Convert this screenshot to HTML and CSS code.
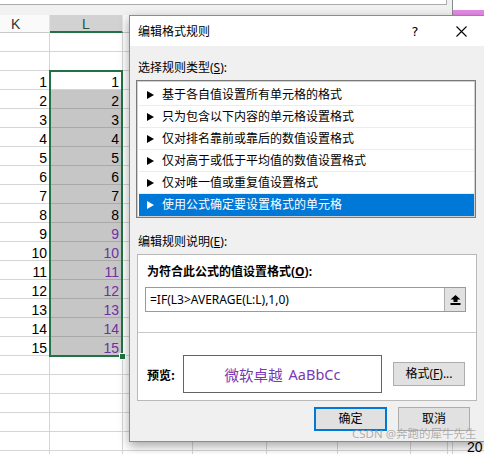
FILE: index.html
```html
<!DOCTYPE html>
<html>
<head>
<meta charset="utf-8">
<link rel="stylesheet" href="styles.css">
</head>
<body>
<div class="sheet">
  <div class="topbar">
    <div class="fbar"></div>
    <div class="vline"></div>
    <div class="rightbar"><div class="pink"></div></div>
  </div>
  <div class="grid">
    <div class="row hdr">
      <div class="c k hk">K</div><div class="c l hl">L</div><div class="c m"></div><div class="c n"></div><div class="c o"></div><div class="c p"></div><div class="c q"></div><div class="c gap"></div><div class="c r"></div>
    </div>
    <div class="row"><div class="c k"></div><div class="c l"></div><div class="c m"></div><div class="c n"></div><div class="c o"></div><div class="c p"></div><div class="c q"></div><div class="c gap"></div><div class="c r"></div></div>
    <div class="row"><div class="c k"></div><div class="c l"></div><div class="c m"></div><div class="c n"></div><div class="c o"></div><div class="c p"></div><div class="c q"></div><div class="c gap"></div><div class="c r"></div></div>
    <div class="row"><div class="c k num">1</div><div class="c l num">1</div><div class="c m"></div><div class="c n"></div><div class="c o"></div><div class="c p"></div><div class="c q"></div><div class="c gap"></div><div class="c r"></div></div>
    <div class="row"><div class="c k num">2</div><div class="c l num g">2</div><div class="c m"></div><div class="c n"></div><div class="c o"></div><div class="c p"></div><div class="c q"></div><div class="c gap"></div><div class="c r"></div></div>
    <div class="row"><div class="c k num">3</div><div class="c l num g">3</div><div class="c m"></div><div class="c n"></div><div class="c o"></div><div class="c p"></div><div class="c q"></div><div class="c gap"></div><div class="c r"></div></div>
    <div class="row"><div class="c k num">4</div><div class="c l num g">4</div><div class="c m"></div><div class="c n"></div><div class="c o"></div><div class="c p"></div><div class="c q"></div><div class="c gap"></div><div class="c r"></div></div>
    <div class="row"><div class="c k num">5</div><div class="c l num g">5</div><div class="c m"></div><div class="c n"></div><div class="c o"></div><div class="c p"></div><div class="c q"></div><div class="c gap"></div><div class="c r"></div></div>
    <div class="row"><div class="c k num">6</div><div class="c l num g">6</div><div class="c m"></div><div class="c n"></div><div class="c o"></div><div class="c p"></div><div class="c q"></div><div class="c gap"></div><div class="c r"></div></div>
    <div class="row"><div class="c k num">7</div><div class="c l num g">7</div><div class="c m"></div><div class="c n"></div><div class="c o"></div><div class="c p"></div><div class="c q"></div><div class="c gap"></div><div class="c r"></div></div>
    <div class="row"><div class="c k num">8</div><div class="c l num g">8</div><div class="c m"></div><div class="c n"></div><div class="c o"></div><div class="c p"></div><div class="c q"></div><div class="c gap"></div><div class="c r"></div></div>
    <div class="row"><div class="c k num">9</div><div class="c l num g pu">9</div><div class="c m"></div><div class="c n"></div><div class="c o"></div><div class="c p"></div><div class="c q"></div><div class="c gap"></div><div class="c r"></div></div>
    <div class="row"><div class="c k num">10</div><div class="c l num g pu">10</div><div class="c m"></div><div class="c n"></div><div class="c o"></div><div class="c p"></div><div class="c q"></div><div class="c gap"></div><div class="c r"></div></div>
    <div class="row"><div class="c k num">11</div><div class="c l num g pu">11</div><div class="c m"></div><div class="c n"></div><div class="c o"></div><div class="c p"></div><div class="c q"></div><div class="c gap"></div><div class="c r"></div></div>
    <div class="row"><div class="c k num">12</div><div class="c l num g pu">12</div><div class="c m"></div><div class="c n"></div><div class="c o"></div><div class="c p"></div><div class="c q"></div><div class="c gap"></div><div class="c r"></div></div>
    <div class="row"><div class="c k num">13</div><div class="c l num g pu">13</div><div class="c m"></div><div class="c n"></div><div class="c o"></div><div class="c p"></div><div class="c q"></div><div class="c gap"></div><div class="c r"></div></div>
    <div class="row"><div class="c k num">14</div><div class="c l num g pu">14</div><div class="c m"></div><div class="c n"></div><div class="c o"></div><div class="c p"></div><div class="c q"></div><div class="c gap"></div><div class="c r"></div></div>
    <div class="row"><div class="c k num">15</div><div class="c l num g pu">15</div><div class="c m"></div><div class="c n"></div><div class="c o"></div><div class="c p"></div><div class="c q"></div><div class="c gap"></div><div class="c r"></div></div>
    <div class="row"><div class="c k"></div><div class="c l"></div><div class="c m"></div><div class="c n"></div><div class="c o"></div><div class="c p"></div><div class="c q"></div><div class="c gap"></div><div class="c r"></div></div>
    <div class="row"><div class="c k"></div><div class="c l"></div><div class="c m"></div><div class="c n"></div><div class="c o"></div><div class="c p"></div><div class="c q"></div><div class="c gap"></div><div class="c r"></div></div>
    <div class="row"><div class="c k"></div><div class="c l"></div><div class="c m"></div><div class="c n"></div><div class="c o"></div><div class="c p"></div><div class="c q"></div><div class="c gap"></div><div class="c r"></div></div>
    <div class="row"><div class="c k"></div><div class="c l"></div><div class="c m"></div><div class="c n"></div><div class="c o"></div><div class="c p"></div><div class="c q"></div><div class="c gap"></div><div class="c r"></div></div>
    <div class="row"><div class="c k"></div><div class="c l"></div><div class="c m"></div><div class="c n"></div><div class="c o"></div><div class="c p"></div><div class="c q"></div><div class="c gap"></div><div class="c r num rnum">20</div></div>
    <div class="row"><div class="c k"></div><div class="c l"></div><div class="c m"></div><div class="c n"></div><div class="c o"></div><div class="c p"></div><div class="c q"></div><div class="c gap"></div><div class="c r"></div></div>
  </div>
  <div class="selection"><div class="handle"></div></div>
</div>

<div class="dlg">
  <div class="titlebar">
    <span class="ttl">编辑格式规则</span>
    <span class="tb help">?</span>
    <span class="tb close"><svg width="11" height="11" viewBox="0 0 11 11"><path d="M0.5 0.5 L10.5 10.5 M10.5 0.5 L0.5 10.5" stroke="#000" stroke-width="1.1" fill="none"/></svg></span>
  </div>
  <div class="dbody">
    <div class="lbl lbl1">选择规则类型(<u>S</u>):</div>
    <div class="listbox">
      <div class="item"><i class="tri"></i>基于各自值设置所有单元格的格式</div>
      <div class="item"><i class="tri"></i>只为包含以下内容的单元格设置格式</div>
      <div class="item"><i class="tri"></i>仅对排名靠前或靠后的数值设置格式</div>
      <div class="item"><i class="tri"></i>仅对高于或低于平均值的数值设置格式</div>
      <div class="item"><i class="tri"></i>仅对唯一值或重复值设置格式</div>
      <div class="item sel"><i class="tri"></i>使用公式确定要设置格式的单元格</div>
    </div>
    <div class="lbl lbl2">编辑规则说明(<u>E</u>):</div>
    <div class="desc">
      <div class="blbl">为符合此公式的值设置格式(<u>O</u>):</div>
      <div class="formula">
        <span class="ftext">=IF(L3&gt;AVERAGE(L:L),1,0)</span>
        <span class="collapse"><svg width="11" height="10" viewBox="0 0 11 10"><polygon points="5.5,0 10.5,4.5 7.5,4.5 7.5,7 3.5,7 3.5,4.5 0.5,4.5" fill="#000"/><rect x="0.5" y="8" width="10" height="2" fill="#000"/></svg></span>
      </div>
      <div class="divider"></div>
      <div class="prow">
        <span class="plbl">预览:</span>
        <div class="pbox"><span class="pcjk">微软卓越</span><span class="plat">AaBbCc</span></div>
        <div class="btn fmt">格式(<u>F</u>)...</div>
      </div>
    </div>
    <div class="actions">
      <div class="btn ok">确定</div>
      <div class="btn cancel">取消</div>
    </div>
  </div>
</div>

<div class="watermark">CSDN @奔跑的犀牛先生</div>
</body>
</html>
```

FILE: styles.css
```css
* { box-sizing: border-box; }
html, body { margin: 0; padding: 0; }
body {
  width: 484px;
  height: 454px;
  overflow: hidden;
  position: relative;
  background: #fff;
  font-family: "Liberation Sans", Arial, sans-serif;
}

/* ---------- spreadsheet ---------- */
.sheet { position: relative; }
.topbar { display: flex; height: 15px; background: #f1f1f1; }
.fbar {
  width: 447px; height: 5px; background: #fff;
  border-right: 1px solid #ababab; border-bottom: 1px solid #ababab;
}
.vline { width: 1px; margin-left: 5px; background: #8a8a8a; }
.rightbar { flex: 1; background: #fff; display: flex; flex-direction: column; justify-content: flex-end; }
.pink { height: 5px; background: #e58ae6; }

.grid { display: flex; flex-direction: column; }
.row { display: flex; height: 19px; flex: none; }
.c {
  flex: none; height: 19px;
  border-right: 1px solid #d5d5d5;
  border-bottom: 1px solid #d5d5d5;
  white-space: nowrap; overflow: hidden;
}
.k { width: 50px; }
.l { width: 73px; }
.m { width: 70px; }
.n { width: 74px; }
.o { width: 71px; }
.p { width: 73px; }
.q { width: 37px; }
.gap { width: 5px; }
.r { flex: 1; border-right: none; }

.hdr { height: 18px; }
.hdr .c {
  height: 18px; background: #fafafa; font-size: 14px; color: #333;
  padding-top: 1px; line-height: 17px; border-right-color: #e3e3e3; border-bottom-color: #c8c8c8;
}
.hk { padding-left: 11px; }
.hl {
  background: #d2d2d2 !important; text-align: center; color: #235a38 !important;
  border-bottom: 2px solid #217346 !important;
}

.num {
  font-size: 14px; line-height: 14px; padding-top: 4px;
  text-align: right; padding-right: 2px; color: #000;
}
.l.num { padding-right: 3px; }
.g { background: #c6c6c6; border-bottom-color: #a9a9a9; }
.pu { color: #7030a0; }
.rnum { text-align: left; padding-left: 14px; padding-top: 8px; overflow: visible; }

.selection {
  position: absolute; left: 49px; top: 70px; width: 74px; height: 287px;
  border: 2px solid #217346;
}
.handle {
  position: absolute; right: -5px; bottom: -5px; width: 7px; height: 7px;
  background: #217346; border: 1px solid #fff;
}

/* ---------- dialog ---------- */
.dlg {
  position: absolute; left: 129px; top: 15px; width: 357px; height: 427px;
  border: 1px solid #8c8c8c; background: #f0f0f0;
  box-shadow: 0 4px 10px rgba(0,0,0,0.35);
  font-family: "Noto Sans", "Noto Sans CJK SC", sans-serif;
  font-size: 12px; color: #000;
  display: flex; flex-direction: column;
}
.titlebar {
  height: 30px; background: #fff; display: flex; align-items: center; flex: none;
}
.ttl { padding-left: 8px; font-family: "Noto Sans CJK SC", sans-serif; font-size: 12px; line-height: 16px; }
.tb { width: 46px; height: 30px; display: flex; align-items: center; justify-content: center; }
.help { margin-left: auto; font-family: "DejaVu Sans", sans-serif; font-size: 13px; }
.close { margin-right: 1px; }

.dbody { display: flex; flex-direction: column; flex: 1; }
.lbl { padding-left: 8px; line-height: 16px; height: 16px; }
.lbl1 { margin-top: 14px; }
.lbl2 { margin-top: 16px; }

.listbox {
  margin: 4px 0 0 6px; width: 340px; height: 138px;
  background: #fff; border: 1px solid #7a7a7a;
  box-shadow: inset 0 0 0 1px #cfcfcf;
  padding: 3px 1px 2px 2px;
}
.item {
  height: 22px; border-bottom: 1px solid #ececec;
  display: flex; align-items: center; padding-left: 8px;
  line-height: 16px;
}
.item:last-child { border-bottom: none; height: 22px; }
.tri {
  width: 0; height: 0; margin-right: 8px;
  border-left: 7px solid #000; border-top: 4px solid transparent; border-bottom: 4px solid transparent;
}
.sel { background: #0078d7; color: #fff; }
.sel .tri { border-left-color: #fff; }

.desc {
  margin: 4px 0 0 7px; width: 340px; height: 147px;
  background: #fff; border: 1px solid #b9b9b9;
  display: flex; flex-direction: column;
}
.blbl { margin: 9px 0 0 9px; font-weight: bold; line-height: 16px; height: 16px; }
.formula {
  margin: 7px 0 0 7px; width: 321px; height: 25px;
  border: 1px solid #9a9a9a; display: flex; align-items: stretch;
}
.ftext { flex: 1; padding-left: 4px; line-height: 23px; }
.collapse {
  width: 21px; background: #e1e1e1; border-left: 1px solid #adadad;
  display: flex; align-items: center; justify-content: center;
}
.divider { margin-top: 20px; height: 1px; background: #c8c8c8; }
.prow { display: flex; align-items: center; margin-top: 22px; padding-left: 9px; }
.plbl { width: 36px; font-weight: bold; font-family: "Noto Sans CJK SC", sans-serif; }
.pbox {
  width: 199px; height: 38px; border: 1px solid #646464;
  display: flex; align-items: center; justify-content: center;
  color: #7a38b4; font-size: 14.5px;
}
.pcjk { font-family: "Noto Sans CJK SC", sans-serif; margin-right: 6px; }
.plat { font-family: "Noto Sans", sans-serif; }

.btn {
  background: #e1e1e1; border: 1px solid #adadad;
  display: flex; align-items: center; justify-content: center;
  height: 24px; line-height: 16px;
}
.fmt { width: 72px; margin-left: 11px; }
.actions { display: flex; margin-top: 6px; padding-left: 184px; }
.ok { width: 73px; border: 2px solid #0078d7; }
.cancel { width: 72px; margin-left: 11px; }

.watermark {
  position: absolute; left: 352px; top: 427px;
  font-family: "Noto Sans", "Noto Sans CJK SC", sans-serif;
  font-size: 11.5px; line-height: 13px; color: rgba(160,160,160,0.85);
  white-space: nowrap;
}
```
